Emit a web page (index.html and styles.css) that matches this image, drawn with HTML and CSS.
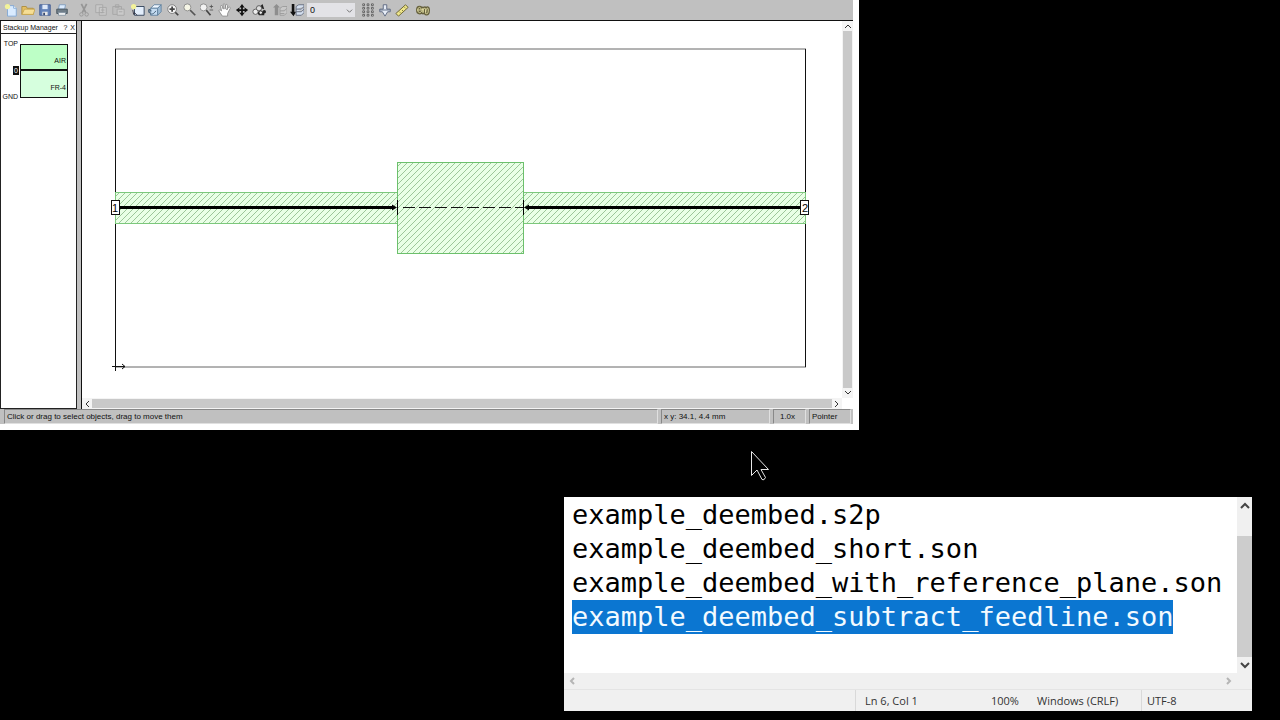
FILE: index.html
```
<!DOCTYPE html>
<html lang="en">
<head>
<meta charset="utf-8">
<title>example_deembed</title>
<link rel="stylesheet" href="styles.css">
</head>
<body>
<main class="desktop">
<section class="editor" aria-label="Project editor">
  <div class="toolbar">
    <div class="group">
      <button class="tool" aria-label="New"><svg viewBox="0 0 16 16"><path d="M4 3h7l3 3v9H4z" fill="#d9ebff" stroke="#7fa6d2"/><path d="M11 3v3h3" fill="#fff" stroke="#7fa6d2"/><circle cx="4" cy="4" r="3" fill="#f3f39a"/></svg></button>
      <button class="tool" aria-label="Open"><svg viewBox="0 0 16 16"><path d="M1 13V4h5l1 2h7v7z" fill="#e5c064" stroke="#a98a3c"/><path d="M1 13l3-6h12l-2 6z" fill="#f6de94" stroke="#c4a450"/></svg></button>
      <button class="tool" aria-label="Save"><svg viewBox="0 0 16 16"><path d="M2 2h12v12H2z" fill="#6482b8" stroke="#415a91"/><path d="M5 2h6v5H5z" fill="#dfe9f8"/><path d="M5 10h6v4H5z" fill="#e8e8e8"/><path d="M6 11h2v3H6z" fill="#35466d"/></svg></button>
      <button class="tool" aria-label="Print"><svg viewBox="0 0 16 16"><path d="M5 2h7l-1 5H4z" fill="#dcecff" stroke="#7c99ba"/><path d="M2 7h12v5H2z" fill="#6f7d88" stroke="#46525c"/><path d="M4 11h8v3H4z" fill="#fafafa" stroke="#8493a1"/></svg></button>
    </div>
    <div class="group">
      <button class="tool" aria-label="Cut"><svg viewBox="0 0 16 16" fill="none" stroke="#969696"><path d="M5 1l5 10M11 1L6 11" stroke-width="2"/><circle cx="5" cy="13" r="2"/><circle cx="11" cy="13" r="2"/></svg></button>
      <button class="tool" aria-label="Copy"><svg viewBox="0 0 16 16" fill="#c8c8c8" stroke="#a5a5a5"><path d="M2 2h8v9H2zM6 5h8v9H6zM8 8h4M8 11h4"/></svg></button>
      <button class="tool" aria-label="Paste"><svg viewBox="0 0 16 16" fill="#bdbdbd" stroke="#a5a5a5"><path d="M2 4h10v9H2zM5 2h4v3H5z"/><path d="M7 7h8v7H7zM9 10h4" fill="#cacaca"/></svg></button>
    </div>
    <div class="group">
      <button class="tool" aria-label="Add rectangle"><svg viewBox="0 0 16 16"><path d="M4 4h11v10H4z" fill="#e3eefb" stroke="#2b3d55"/><circle cx="3" cy="4" r="3" fill="#f3f39a"/><path d="M2 8l1 5 1-2 3 3" fill="none" stroke="#334"/></svg></button>
      <button class="tool" aria-label="3D view"><svg viewBox="0 0 16 16" stroke="#60809e"><path d="M3 6l4-4h8l-4 4z" fill="#eff7ff"/><path d="M3 6h8v8H3z" fill="#c5dcf1"/><path d="M11 6l4-4v8l-4 4z" fill="#9dbad4"/><path d="M1 8c0 6 5 6 8 1M1 11V7l3 2" fill="none" stroke="#38536d"/></svg></button>
    </div>
    <div class="group">
      <button class="tool" aria-label="Zoom in"><svg viewBox="0 0 16 16" fill="none" stroke="#444"><path d="M10 10l4 4" stroke-width="2"/><circle cx="7" cy="7" r="5" fill="#f4f4f4" stroke="#777"/><path d="M4 7h6M7 4v6" stroke-width="2"/></svg></button>
      <button class="tool" aria-label="Zoom"><svg viewBox="0 0 16 16" fill="none"><path d="M8 8l6 6" stroke="#555" stroke-width="2"/><circle cx="5" cy="5" r="4" fill="#f5f5e5" stroke="#888"/></svg></button>
      <button class="tool" aria-label="Zoom in or out"><svg viewBox="0 0 16 16" fill="none"><path d="M7 8l5 6" stroke="#444" stroke-width="2"/><circle cx="4" cy="5" r="4" fill="#f2f2f2" stroke="#888"/><path d="M11 4h4M13 2v4M11 8h4" stroke="#555"/></svg></button>
    </div>
    <div class="group">
      <button class="tool" aria-label="Pan"><svg viewBox="0 0 16 16"><path d="M5 15L1 9c0-2 2-1 3 0L3 4c0-2 2-1 2 0l1 3V2c0-2 2-1 2 0v5l1-5c1-1 2 0 2 1l-1 5 2-3c1-1 2 0 2 1l-3 6v3z" fill="#fff" stroke="#888"/></svg></button>
      <button class="tool" aria-label="Fit to window"><svg viewBox="0 0 16 16" fill="#111"><path d="M8 1l3 4H5zM8 15l3-4H5zM1 8l4-3v6zM15 8l-4-3v6zM7 5h2v6H7zM5 7h6v2H5z"/></svg></button>
      <button class="tool" aria-label="Find"><svg viewBox="0 0 16 16"><path d="M8 5l4-4 2 6z" fill="#222"/><path d="M5 10h9v4H8z" fill="#222"/><circle cx="4" cy="10" r="3" fill="#eee" stroke="#555"/><circle cx="8" cy="6" r="3" fill="#ddd" stroke="#555"/><circle cx="10" cy="11" r="2" fill="#eee" stroke="#222"/><circle cx="14" cy="10" r="2" fill="#222"/></svg></button>
    </div>
    <div class="group">
      <button class="tool" aria-label="Up one level"><svg viewBox="0 0 16 16"><path d="M4 1l4 4H6v9H2V5H0z" fill="#8e8e8e"/><path d="M8 6l3-2h5v7l-3 3H8zM8 9h5l3-3M8 12h5" fill="#c9c9c9" stroke="#999"/></svg></button>
      <button class="tool" aria-label="Down one level"><svg viewBox="0 0 16 16"><path d="M2 1h3v9h2l-3 5-4-5h2z" fill="#111"/><path d="M7 4l3-2h6v9l-3 3H7zM7 7h6l3-3M7 10h6l3-3" fill="#d4dfef" stroke="#60687a"/></svg></button>
      <select class="level" aria-label="Level"><option>0</option></select>
    </div>
    <div class="group">
      <button class="tool" aria-label="Grid"><svg viewBox="0 0 16 16" fill="#eee" stroke="#555"><path d="M2 1h2v2H2zM7 1h2v2H7zM12 1h2v2h-2zM2 5h2v2H2zM7 5h2v2H7zM12 5h2v2h-2zM2 9h2v2H2zM7 9h2v2H7zM12 9h2v2h-2zM2 13h2v2H2zM7 13h2v2H7zM12 13h2v2h-2z"/></svg></button>
      <button class="tool" aria-label="Snap"><svg viewBox="0 0 16 16" fill="#e7edf7" stroke="#56627c"><path d="M6 2h4v5h4v3h-3l-3 5-3-5H2V7h4zM2 8h12"/></svg></button>
      <button class="tool" aria-label="Measure"><svg viewBox="0 0 16 16"><path d="M1 12L12 2l3 3L4 15z" fill="#eee68a" stroke="#61592a"/><path d="M5 10l1 1M8 8l1 1M11 5l1 1" stroke="#61592a"/></svg></button>
    </div>
    <div class="group">
      <button class="tool" aria-label="Analyze"><svg viewBox="0 0 16 16" fill="none" stroke-linecap="round" stroke-linejoin="round"><path d="M2 8h4c0-4-4-4-4 0s4 4 5 0l1-2v5c0-5 3-7 3-3v3c0-5 3-7 3-3s-1 5-3 4" stroke="#65603d" stroke-width="4"/><path d="M2 8h4c0-4-4-4-4 0s4 4 5 0l1-2v5c0-5 3-7 3-3v3c0-5 3-7 3-3s-1 5-3 4" stroke="#ece7ab" stroke-width="1"/></svg></button>
    </div>
  </div>
  <div class="workspace">
    <aside class="stackup">
      <header class="stackup-head"><span class="stackup-title">Stackup Manager</span><button class="mini" aria-label="Help">?</button><button class="mini" aria-label="Close">X</button></header>
      <div class="stack">
        <div class="stack-labels"><span>TOP</span><span class="stack-level">0</span><span>GND</span></div>
        <div class="layers"><div class="layer air">AIR</div><div class="layer fr">FR-4</div></div>
      </div>
    </aside>
    <div class="view">
      <svg class="drawing" viewBox="82 21 760 377" role="img" aria-label="Circuit layout">
        <defs>
          <pattern id="hatch" width="6" height="6" patternUnits="userSpaceOnUse">
            <rect width="6" height="6" fill="#e9ffe6"/>
            <path d="M-1 1L1-1M0 6L6 0M5 7L7 5" stroke="#9dc69a"/>
          </pattern>
        </defs>
        <path d="M115 49H806M115 367H806" stroke="#666"/>
        <path d="M115.500 49V367M805.500 49V367" stroke="#111"/>
        <rect x="115.500" y="192.500" width="690" height="31" fill="url(#hatch)" stroke="#7cc87c"/>
        <rect x="397.500" y="162.500" width="126" height="91" fill="url(#hatch)" stroke="#6cc06c"/>
        <path d="M120 207.500H393M528 207.500H801" stroke="#000" stroke-width="3"/>
        <path d="M392 204.500L397 207.500L392 210.500ZM529 204.500L524 207.500L529 210.500Z"/>
        <path d="M403 207.500H523" stroke="#111" stroke-dasharray="12 4"/>
        <path d="M397.500 200V215M523.500 200V215" stroke="#000"/>
        <path d="M112 366.500H125M122 364L125 366.500L122 369M115.500 357V371" stroke="#111" fill="none"/>
        <g class="port"><rect x="111.500" y="200.500" width="8" height="14"/><text x="115" y="212">1</text>
        <rect x="800.500" y="200.500" width="8" height="14"/><text x="805" y="212">2</text></g>
      </svg>
      <div class="bar vertical"><button class="arrow" aria-label="Scroll up"><svg viewBox="0 0 8 8"><path d="M1 6l3-3 3 3"/></svg></button><div class="thumb"></div><button class="arrow" aria-label="Scroll down"><svg viewBox="0 0 8 8"><path d="M1 2l3 3 3-3"/></svg></button></div>
      <div class="bar horizontal"><button class="arrow" aria-label="Scroll left"><svg viewBox="0 0 8 8"><path d="M6 1L3 4l3 3"/></svg></button><div class="thumb"></div><button class="arrow" aria-label="Scroll right"><svg viewBox="0 0 8 8"><path d="M2 1l3 3-3 3"/></svg></button></div>
    </div>
  </div>
  <footer class="status"><span class="cell message">Click or drag to select objects, drag to move them</span><span class="cell position">x y: 34.1, 4.4 mm</span><span class="cell scale">1.0x</span><span class="cell mode">Pointer</span></footer>
</section>

<svg class="cursor" viewBox="0 0 20 32" aria-hidden="true"><path d="M1.500 1.500V25.500L7 20L12 29.500Q14 31 15.500 27.500L11 19.500H18.500Z" fill="#000" stroke="#e8e8e8"/></svg>

<section class="notepad" aria-label="Text editor">
  <div class="text" role="textbox" aria-multiline="true" aria-label="Document" contenteditable="true" spellcheck="false"><div>example_deembed.s2p</div><div>example_deembed_short.son</div><div>example_deembed_with_reference_plane.son</div><div><mark>example_deembed_subtract_feedline.son</mark></div></div>
  <div class="note-bar note-vertical"><button class="note-arrow" aria-label="Scroll up"><svg viewBox="0 0 12 12"><path d="M2 8l4-4 4 4"/></svg></button><div class="note-thumb"></div><button class="note-arrow" aria-label="Scroll down"><svg viewBox="0 0 12 12"><path d="M2 4l4 4 4-4"/></svg></button></div>
  <div class="note-bar note-horizontal"><button class="note-arrow" aria-label="Scroll left"><svg viewBox="0 0 12 12"><path d="M8 3L5 6l3 3"/></svg></button><button class="note-arrow" aria-label="Scroll right"><svg viewBox="0 0 12 12"><path d="M4 3l3 3-3 3"/></svg></button></div>
  <footer class="note-status"><span class="note-cell caret">Ln 6, Col 1</span><span class="note-cell zoom">100%</span><span class="note-cell ending">Windows (CRLF)</span><span class="note-cell encoding">UTF-8</span></footer>
</section>
</main>
</body>
</html>
```
FILE: styles.css
```
* { box-sizing: border-box; }
body { margin: 0; background: #000; }
button { margin: 0; padding: 0; border: 0; background: none; font: inherit; color: inherit; }
.desktop { position: relative; height: 100vh; overflow: hidden; }

.editor {
  position: absolute; inset: 0 421px 290px 0;
  display: flex; flex-direction: column;
  background: #c0c0c0;
  border: solid #fff; border-width: 0 6px 6px 0;
  font-family: "Liberation Sans", Arial, sans-serif; font-size: 8px; color: #111;
}
.toolbar { display: flex; align-items: center; height: 21px; padding-left: 2px; border-bottom: 1px solid #111; }
.group { display: flex; align-items: center; }
.group:nth-child(2) { margin-left: 5px; }
.group:nth-child(3) { margin-left: 3px; }
.group:nth-child(4), .group:nth-child(5) { margin-left: 1px; }
.group:nth-child(6), .group:nth-child(7), .group:nth-child(8) { margin-left: 4px; }
.tool { width: 17px; height: 16px; display: flex; align-items: center; justify-content: center; }
.tool svg { width: 14px; height: 14px; }
.level {
  appearance: none; width: 48px; height: 14px; margin: 0 0 0 2px; padding: 0 3px; border: 0; border-radius: 0;
  font: 9px "Liberation Sans", Arial, sans-serif; color: #111;
  background: #e2e2e6 url("data:image/svg+xml,%3Csvg xmlns='http://www.w3.org/2000/svg' viewBox='0 0 8 8'%3E%3Cpath d='M1 3l3 3 3-3' fill='none' stroke='%23666'/%3E%3C/svg%3E") no-repeat right 2px center / 7px 7px;
}
.workspace { flex: 1; min-height: 0; display: flex; gap: 4px; }
.stackup { width: 77px; background: #fff; border: 1px solid #222; border-width: 0 1px 1px; font-size: 7px; }
.stackup-head { display: flex; align-items: center; height: 13px; padding: 0 0 0 2px; border-bottom: 1px solid #222; }
.stackup-title { flex: 1; white-space: nowrap; }
.mini { width: 7px; text-align: center; }
.stack { display: flex; padding-top: 5px; }
.stack-labels { width: 19px; height: 62px; padding-right: 2px; display: flex; flex-direction: column; justify-content: space-between; align-items: flex-end; line-height: 9px; }
.stack-level { background: #111; color: #fff; width: 6px; text-align: center; margin-right: -1px; }
.layers { width: 48px; margin-top: 5px; border: 1px solid #111; height: 54px; }
.layer { display: flex; align-items: center; justify-content: flex-end; padding-right: 1px; }
.layer.air { height: 26px; padding-top: 6px; background: #bdffc6; border-bottom: 2px solid #111; }
.layer.fr { height: 26px; padding-top: 6px; background: #d6ffde; }
.view { flex: 1; min-width: 0; display: grid; grid-template: 1fr 11px / 1fr 11px; background: #fff; border-left: 1px solid #111; }
.drawing { display: block; width: 100%; height: 100%; min-width: 0; min-height: 0; }
.port rect { fill: #fff; stroke: #111; }
.port text { font-size: 11px; text-anchor: middle; fill: #000; }
.bar { display: flex; background: #f4f4f4; }
.vertical { flex-direction: column; padding: 0 1px; }
.horizontal { padding: 1px 0; }
.arrow { flex: none; width: 10px; height: 10px; display: flex; align-items: center; justify-content: center; }
.arrow svg { width: 8px; height: 8px; fill: none; stroke: #333; }
.thumb { flex: 1; background: #c9c9c9; }
.status { display: flex; gap: 3px; height: 15px; padding: 0 2px 0 4px; }
.cell { border: 1px solid; border-color: #888 #e0e0e0 #e0e0e0 #888; padding-left: 2px; line-height: 14px; white-space: nowrap; }
.message { flex: 1; }
.position { width: 109px; }
.scale { width: 33px; padding: 0 4px 0 0; text-align: center; }
.mode { width: 42px; }

.cursor { position: absolute; left: 750px; top: 450px; width: 20px; height: 32px; }

.notepad {
  position: absolute; inset: 497px 28px 9px 564px;
  display: grid; grid-template: 1fr 16px 22px / 1fr 15px;
  background: #f0f0f0;
  font-family: "Open Sans", "Noto Sans", sans-serif; font-size: 11px; color: #333;
}
.text { overflow: hidden; min-width: 0; padding: 1px 0 0 8px; background: #fff; color: #000; font: 27px/34px "DejaVu Sans Mono", monospace; white-space: pre; outline: 0; }
.text mark { display: inline-block; background: #0b76d1; color: #f2faff; }
.note-bar { display: flex; }
.note-vertical { flex-direction: column; align-items: center; }
.note-arrow { flex: none; width: 15px; height: 16px; display: flex; align-items: center; justify-content: center; }
.note-arrow svg { width: 12px; height: 12px; fill: none; stroke: #444; stroke-width: 2; }
.note-vertical .note-arrow:first-child { height: 17px; margin-bottom: 22px; }
.note-thumb { flex: 1; width: 15px; background: #cdcdcd; }
.note-horizontal { justify-content: space-between; padding-right: 1px; }
.note-horizontal svg { stroke: #b5b5b5; }
.note-status { grid-column: 1 / -1; display: flex; justify-content: flex-end; border-top: 1px solid #e4e4e4; line-height: 21px; }
.note-cell { white-space: nowrap; padding-left: 9px; }
.caret { width: 127px; border-left: 1px solid #d9d9d9; }
.zoom { width: 46px; }
.ending { width: 113px; }
.encoding { width: 111px; padding-left: 5px; border-left: 1px solid #d9d9d9; }
```
